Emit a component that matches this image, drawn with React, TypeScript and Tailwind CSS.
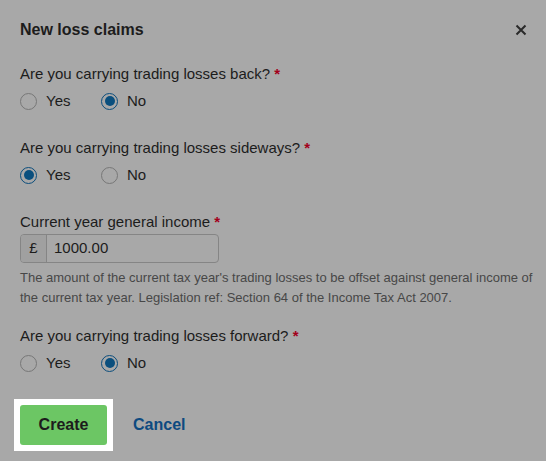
import React from 'react';

const Radio = ({ label, checked }: { label: string; checked: boolean }) => (
  <label className="flex items-center gap-[9px] w-[81px] cursor-pointer">
    <span
      className={`flex items-center justify-center w-[17px] h-[17px] rounded-full border ${
        checked ? 'border-[#0b4d7c] border-[1.5px]' : 'border-[#777]'
      }`}
    >
      {checked && <span className="w-[10px] h-[10px] rounded-full bg-[#0a4f7e]" />}
    </span>
    <span className="text-[15px] text-[#1c1c1c]">{label}</span>
  </label>
);

const Question = ({ text, value, className }: { text: string; value: 'yes' | 'no'; className: string }) => (
  <div className={className}>
    <div className="text-[15px] leading-[20px] text-[#1c1c1c]">
      {text} <span className="text-[#a3001b] font-bold">*</span>
    </div>
    <div className="flex items-center h-[20px] mt-[7px]">
      <Radio label="Yes" checked={value === 'yes'} />
      <Radio label="No" checked={value === 'no'} />
    </div>
  </div>
);

const App = () => {
  return (
    <div className="w-[546px] h-[461px] bg-[#a8a8a8] px-5 font-['Liberation_Sans',Arial,sans-serif]">
      <div className="flex items-center justify-between pt-[18px]">
        <h1 className="text-[16px] leading-[24px] font-bold text-[#1c1c1c]">New loss claims</h1>
        <button className="mr-[-1px] text-[#2a2a2a]">
          <svg width="12" height="12" viewBox="0 0 12 12" fill="none" stroke="currentColor" strokeWidth="2">
            <path d="M1.5 1.5l9 9M10.5 1.5l-9 9" />
          </svg>
        </button>
      </div>

      <Question className="mt-[22px]" text="Are you carrying trading losses back?" value="no" />
      <Question className="mt-[27px]" text="Are you carrying trading losses sideways?" value="yes" />

      <div className="mt-[27px]">
        <div className="text-[15px] leading-[20px] text-[#1c1c1c]">
          Current year general income <span className="text-[#a3001b] font-bold">*</span>
        </div>
        <div className="mt-[2px] flex w-[199px] h-[29px] border border-[#858585] rounded-[4px] overflow-hidden">
          <span className="w-[26px] flex items-center justify-center bg-[#a0a0a0] border-r border-[#858585] text-[15px] text-[#1c1c1c]">
            £
          </span>
          <input
            className="flex-1 min-w-0 bg-transparent px-[7px] text-[15px] text-[#1c1c1c] outline-none"
            defaultValue="1000.00"
          />
        </div>
        <p className="mt-[5px] mr-[-12px] text-[13px] leading-[20px] text-[#474747]">
          The amount of the current tax year's trading losses to be offset against general income of the current tax
          year. Legislation ref: Section 64 of the Income Tax Act 2007.
        </p>
      </div>

      <Question className="mt-[18px]" text="Are you carrying trading losses forward?" value="no" />

      <div className="mt-[26px] ml-[-6px] flex items-center gap-[20px]">
        <div className="bg-white p-[6px]">
          <button className="block w-[87px] h-[40px] rounded-[3px] bg-[#6cc664] text-[16px] font-bold text-[#1c1c1c]">
            Create
          </button>
        </div>
        <button className="text-[16px] font-bold text-[#0d4a80]">Cancel</button>
      </div>
    </div>
  );
};

export default App;
